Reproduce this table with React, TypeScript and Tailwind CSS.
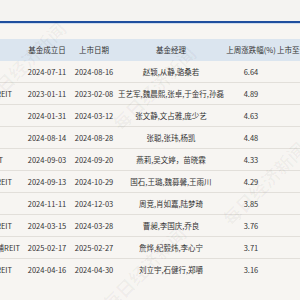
type Row = {
  tail: string
  tailPad: string
  founded: string
  listed: string
  managers: string
  change: string
}

const rows: Row[] = [
  { tail: '', tailPad: 'pr-[10px]', founded: '2024-07-11', listed: '2024-08-16', managers: '赵颖,从静,骆桑若', change: '6.64' },
  { tail: 'REIT', tailPad: 'pr-[10px]', founded: '2023-01-11', listed: '2023-02-08', managers: '王艺军,魏晨熙,张卓,于金行,孙磊', change: '4.89' },
  { tail: '', tailPad: 'pr-[10px]', founded: '2024-01-31', listed: '2024-03-12', managers: '张文静,文占雅,庞少艺', change: '4.63' },
  { tail: '', tailPad: 'pr-[10px]', founded: '2024-08-14', listed: '2024-08-28', managers: '张聪,张玮,杨凯', change: '4.48' },
  { tail: 'REIT', tailPad: 'pr-[19px]', founded: '2024-09-03', listed: '2024-09-20', managers: '燕莉,吴文婷，苗晓霖', change: '4.33' },
  { tail: 'REIT', tailPad: 'pr-[10px]', founded: '2024-09-13', listed: '2024-10-29', managers: '国石,王璐,魏募馨,王雨川', change: '4.29' },
  { tail: '', tailPad: 'pr-[10px]', founded: '2024-11-11', listed: '2024-12-03', managers: '周竞,肖如嘉,陆梦琦', change: '3.85' },
  { tail: 'REIT', tailPad: 'pr-[10px]', founded: '2024-03-15', listed: '2024-03-28', managers: '曹昶,李国庆,乔良', change: '3.76' },
  { tail: '商铺REIT', tailPad: 'pr-[2px]', founded: '2025-02-17', listed: '2025-02-27', managers: '詹烨,纪毅炜,李心宁', change: '3.71' },
  { tail: 'REIT', tailPad: 'pr-[10px]', founded: '2024-04-16', listed: '2024-04-30', managers: '刘立宇,石健行,郑嚼', change: '3.16' },
]

const grid = 'grid grid-cols-[22px_50px_44px_110px_50px_1fr] items-center'

function Watermark({ className }: { className: string }) {
  return (
    <span className={`pointer-events-none absolute -rotate-45 whitespace-nowrap text-[18px] font-bold text-black/[0.035] ${className}`}>
      每日经济新闻
    </span>
  )
}

export default function App() {
  return (
    <div
      className="relative h-[300px] w-[300px] overflow-hidden bg-[#f7f5f2] text-[7.5px] text-[#333]"
      style={{ fontFamily: '"Noto Sans CJK SC", "Noto Sans", sans-serif' }}
    >
      <div className="h-[21px] bg-[#f4f3f1]" />
      <div className="h-[2px] bg-[#1f4f9e]" />
      <div className="h-px bg-[#cfdcec]" />
      <div className="h-[15px]" />

      <div className={`${grid} h-[22px] bg-[#dbe5ef]`}>
        <div />
        <div className="text-center">基金成立日</div>
        <div className="text-center">上市日期</div>
        <div className="text-center">基金经理</div>
        <div className="text-center">上周涨跌幅(%)</div>
        <div className="whitespace-nowrap pl-[1px]">上市至今涨跌幅(%)</div>
      </div>

      {rows.map((row, i) => (
        <div
          key={row.founded + i}
          className={`${grid} h-[22px] ${i < rows.length - 1 ? 'border-b border-[#e2dfda]' : ''}`}
        >
          <div className={`flex justify-end overflow-hidden whitespace-nowrap ${row.tailPad}`}>
            <span>{row.tail}</span>
          </div>
          <div className="text-center">{row.founded}</div>
          <div className="text-center">{row.listed}</div>
          <div className="whitespace-nowrap text-center">{row.managers}</div>
          <div className="text-center">{row.change}</div>
          <div />
        </div>
      ))}

      <Watermark className="left-[-30px] top-[50px]" />
      <Watermark className="left-[100px] top-[75px]" />
      <Watermark className="left-[210px] top-[170px]" />
      <Watermark className="left-[90px] top-[255px]" />
    </div>
  )
}
